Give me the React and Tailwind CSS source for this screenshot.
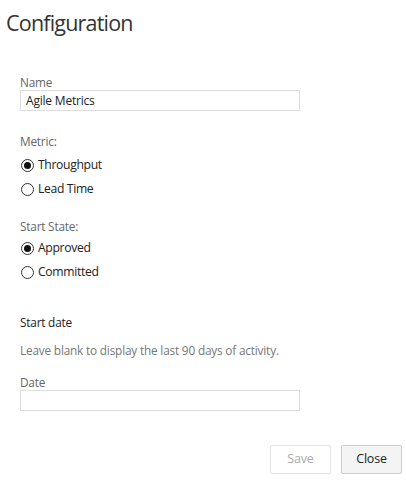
import React from "react";

function Radio({ checked, label }) {
  return (
    <div className="flex items-center h-[24px]">
      <div className="ml-[1px] w-[13px] h-[13px] rounded-full border border-[#333] flex items-center justify-center bg-white">
        {checked && <div className="w-[7px] h-[7px] rounded-full bg-[#111]" />}
      </div>
      <span className="ml-[4px] text-[12.2px] tracking-[-0.35px] leading-[18px] text-[#222]">{label}</span>
    </div>
  );
}

export default function App() {
  return (
    <div
      className="w-[406px] h-[484px] bg-white flex flex-col"
      style={{ fontFamily: '"Open Sans", "Noto Sans", sans-serif' }}
    >
      <h1 className="pl-[6px] pt-[7px] text-[21.5px] tracking-[-0.8px] leading-[32px] text-[#333] font-normal">
        Configuration
      </h1>
      <div className="px-[20px] flex flex-col">
        <div className="mt-[35px] text-[11.8px] tracking-[-0.2px] leading-[16px] text-[#666]">Name</div>
        <div className="w-[280px] h-[21px] border border-[#ddd] flex items-center px-[5px] text-[12px] tracking-[-0.2px] text-[#222]">
          Agile Metrics
        </div>

        <div className="mt-[22px] text-[11.8px] tracking-[-0.2px] leading-[16px] text-[#666]">Metric:</div>
        <div className="mt-[4px]">
          <Radio checked label="Throughput" />
          <Radio label="Lead Time" />
        </div>

        <div className="mt-[17px] text-[11.8px] tracking-[-0.2px] leading-[16px] text-[#666]">Start State:</div>
        <div className="mt-[2px]">
          <Radio checked label="Approved" />
          <Radio label="Committed" />
        </div>

        <div className="mt-[30px] text-[11.8px] tracking-[-0.2px] leading-[16px] text-[#222]">Start date</div>
        <div className="mt-[12px] text-[11.8px] tracking-[-0.18px] leading-[16px] text-[#777]">
          Leave blank to display the last 90 days of activity.
        </div>
        <div className="mt-[16px] text-[11.8px] tracking-[-0.2px] leading-[16px] text-[#666]">Date</div>
        <div className="w-[280px] h-[21px] border border-[#ddd]" />
      </div>
      <div className="mt-auto flex justify-end gap-[10px] pr-[4px] pb-[10px]">
        <button className="w-[61px] h-[29px] border border-[#e3e3e3] bg-white text-[12.5px] tracking-[-0.2px] text-[#aaa] rounded-[2px]">
          Save
        </button>
        <button className="w-[61px] h-[29px] border border-[#ccc] bg-[#f4f4f4] text-[12.5px] tracking-[-0.2px] text-[#222] rounded-[2px]">
          Close
        </button>
      </div>
    </div>
  );
}
